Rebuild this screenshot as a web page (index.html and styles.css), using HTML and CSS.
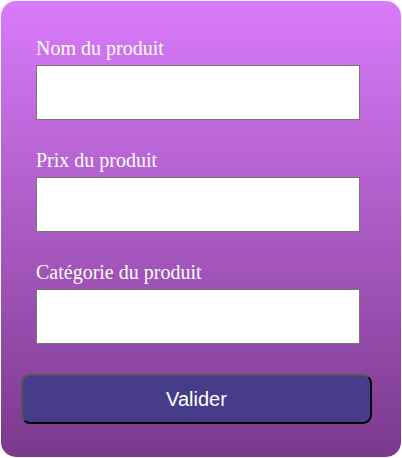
FILE: index.html
```html
<!DOCTYPE html>
<html lang="fr">
<head>
<meta charset="utf-8">
<title>Produit</title>
<link rel="stylesheet" href="styles.css">
</head>
<body>
<form class="card">
  <div class="field">
    <label class="label" for="nom">Nom du produit</label>
    <input class="input" id="nom" type="text">
  </div>
  <div class="field">
    <label class="label" for="prix">Prix du produit</label>
    <input class="input" id="prix" type="text">
  </div>
  <div class="field">
    <label class="label" for="cat">Catégorie du produit</label>
    <input class="input" id="cat" type="text">
  </div>
  <button class="btn" type="button">Valider</button>
</form>
</body>
</html>
```
FILE: styles.css
```css
html, body {
  margin: 0;
  padding: 0;
  background: #ffffff;
}
body {
  padding: 1px;
}
.card {
  box-sizing: border-box;
  width: 400px;
  height: 456px;
  border-radius: 15px;
  background: linear-gradient(to bottom, #d97bfb, #7a398c);
  padding: 36px 41px 0 20px;
  display: flex;
  flex-direction: column;
  font-family: "Liberation Serif", serif;
}
.field {
  display: flex;
  flex-direction: column;
  padding-left: 15px;
  margin-bottom: 29px;
}
.field:last-of-type {
  margin-bottom: 30px;
}
.label {
  color: #ffffff;
  font-size: 20px;
  line-height: 23px;
  margin-bottom: 5px;
}
.input {
  box-sizing: border-box;
  height: 55px;
  width: 324px;
  margin: 0;
  border: 1px solid #767676;
  background: #ffffff;
  padding: 0 4px;
}
.btn {
  box-sizing: border-box;
  width: 351px;
  height: 50px;
  margin: 0;
  border: 2px solid;
  border-color: #555555 #000000 #000000 #555555;
  border-radius: 9px;
  background: #463c89;
  color: #ffffff;
  font-family: "Liberation Sans", Arial, sans-serif;
  font-size: 20px;
}
```
